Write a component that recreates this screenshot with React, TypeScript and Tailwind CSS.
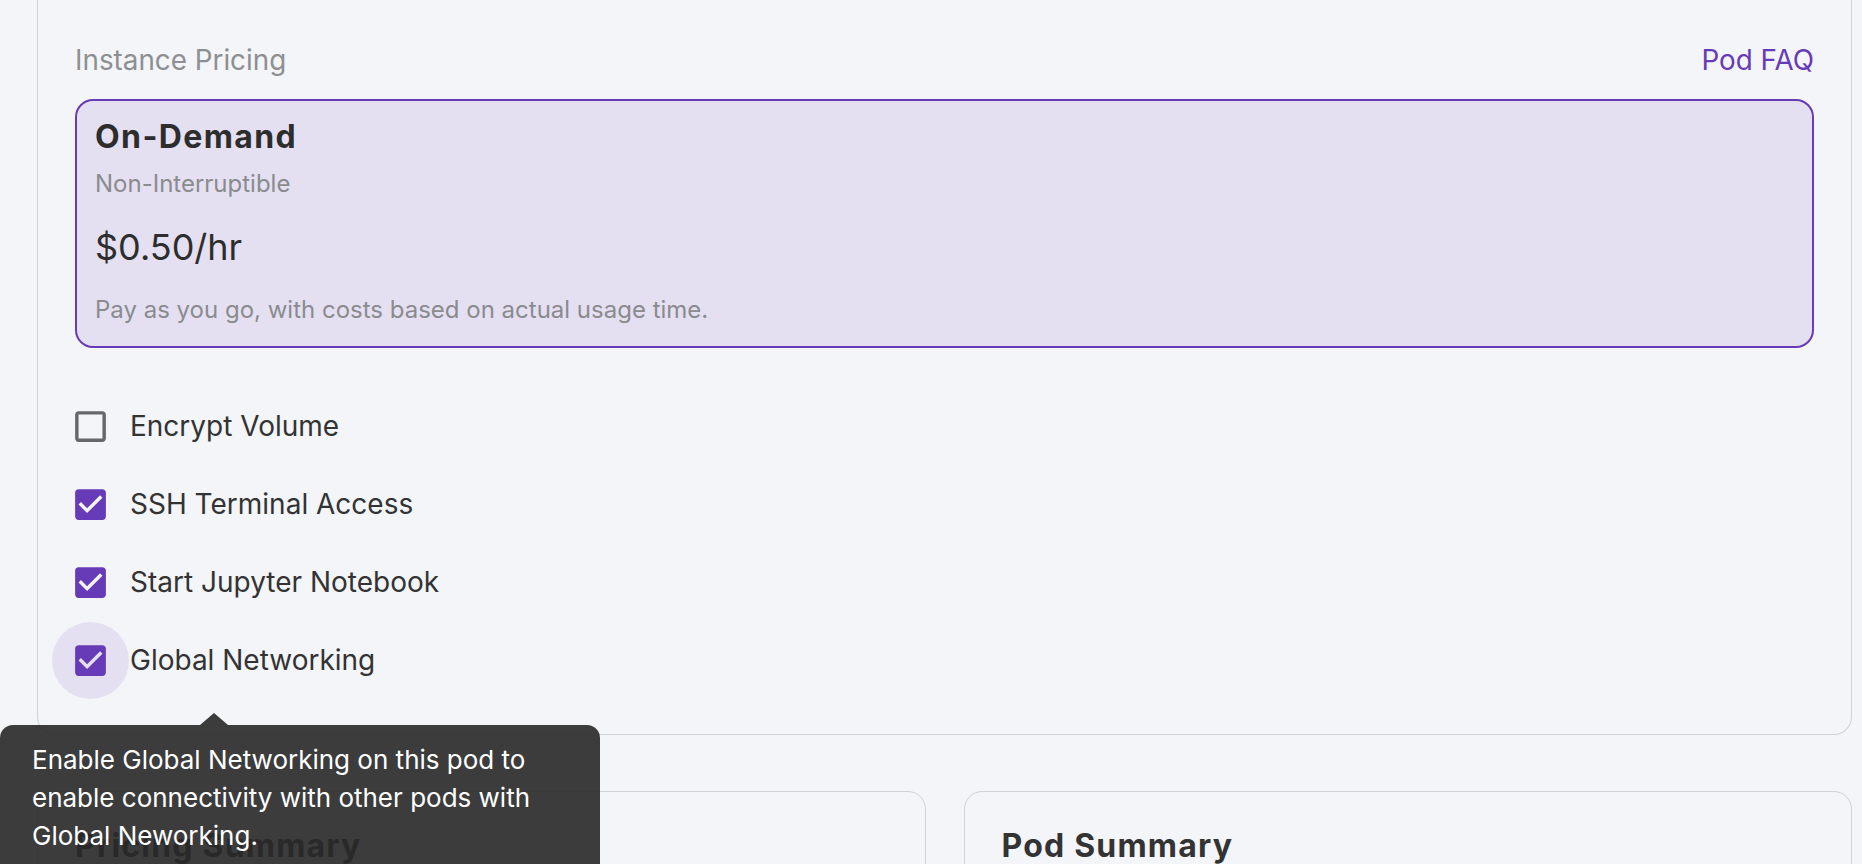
import React from "react";

const CheckedIcon = () => (
  <svg viewBox="0 0 24 24" className="w-[41px] h-[41px] fill-[#673ab7]">
    <path d="M19 3H5c-1.11 0-2 .9-2 2v14c0 1.1.89 2 2 2h14c1.11 0 2-.9 2-2V5c0-1.1-.89-2-2-2zm-9 14l-5-5 1.41-1.41L10 14.17l7.59-7.59L19 8l-9 9z" />
  </svg>
);

const UncheckedIcon = () => (
  <svg viewBox="0 0 24 24" className="w-[41px] h-[41px] fill-[#666769]">
    <path d="M19 5v14H5V5h14m0-2H5c-1.1 0-2 .9-2 2v14c0 1.1.9 2 2 2h14c1.1 0 2-.9 2-2V5c0-1.1-.9-2-2-2z" />
  </svg>
);

type Option = { label: string; checked: boolean; focused?: boolean };

const options: Option[] = [
  { label: "Encrypt Volume", checked: false },
  { label: "SSH Terminal Access", checked: true },
  { label: "Start Jupyter Notebook", checked: true },
  { label: "Global Networking", checked: true, focused: true },
];

const App: React.FC = () => {
  return (
    <div className="relative h-[864px] overflow-hidden bg-[#f3f5f9] font-['Inter','Noto_Sans',sans-serif] text-[#333333]">
      <div className="pl-[37px] pr-[10px]">
        {/* pod options card (scrolled, top edge above view) */}
        <div className="border border-t-0 border-[#cfd2d7] rounded-b-[18px] pt-[40px] px-[37px] pb-[35px]">
          <div className="flex justify-between text-[27.8px] leading-[40px] mb-[19px]">
            <span className="text-[#8e8f92]">Instance Pricing</span>
            <span className="text-[#673ab7]">Pod FAQ</span>
          </div>

          <div className="border-2 border-[#673ab7] bg-[#e4e0f2] rounded-[18px] pt-[16px] pb-[20px] px-[18px]">
            <div className="text-[32px] leading-[40px] font-bold tracking-[1.4px] text-[#2d2d2d]">On-Demand</div>
            <div className="mt-[10.5px] text-[24px] leading-[32px] text-[#8a8b8e]">Non-Interruptible</div>
            <div className="mt-[23.5px] text-[36px] leading-[48px] text-[#2d2d2d]">$0.50/hr</div>
            <div className="mt-[22.5px] text-[24px] leading-[32px] text-[#8a8b8e]">
              Pay as you go, with costs based on actual usage time.
            </div>
          </div>

          <div className="mt-[39.5px] flex flex-col">
            {options.map((o) => (
              <label key={o.label} className="flex items-center h-[78px]">
                <span
                  className={`ml-[-23px] w-[77px] h-[77px] rounded-full flex items-center justify-center ${
                    o.focused ? "bg-[#e4e0f2]" : ""
                  }`}
                >
                  {o.checked ? <CheckedIcon /> : <UncheckedIcon />}
                </span>
                <span className="ml-[1px] text-[28px] leading-[40px] text-[#333333]">{o.label}</span>
              </label>
            ))}
          </div>
        </div>

        <div className="grid grid-cols-2 gap-[38px] mt-[56px]">
          <div className="border border-[#cfd2d7] rounded-[18px] pt-[34px] px-[37px] h-[200px]">
            <h2 className="text-[32px] leading-[40px] font-bold tracking-[1.2px] text-[#333333]">Pricing Summary</h2>
          </div>
          <div className="border border-[#cfd2d7] rounded-[18px] pt-[34px] px-[37px] h-[200px]">
            <h2 className="text-[32px] leading-[40px] font-bold tracking-[1.2px] text-[#333333]">Pod Summary</h2>
          </div>
        </div>
      </div>

      {/* tooltip for Global Networking */}
      <div className="absolute left-0 top-[725px] w-[600px] h-[200px] bg-[rgba(40,40,40,0.9)] rounded-[13px] pt-[16px] px-[32px] text-white text-[26px] leading-[38px]">
        <span className="absolute top-[-12px] left-[200px] w-0 h-0 border-l-[14px] border-r-[14px] border-b-[12px] border-l-transparent border-r-transparent border-b-[rgba(40,40,40,0.9)]" />
        Enable Global Networking on this pod to enable connectivity with other pods with Global Neworking.
      </div>
    </div>
  );
};

export default App;
